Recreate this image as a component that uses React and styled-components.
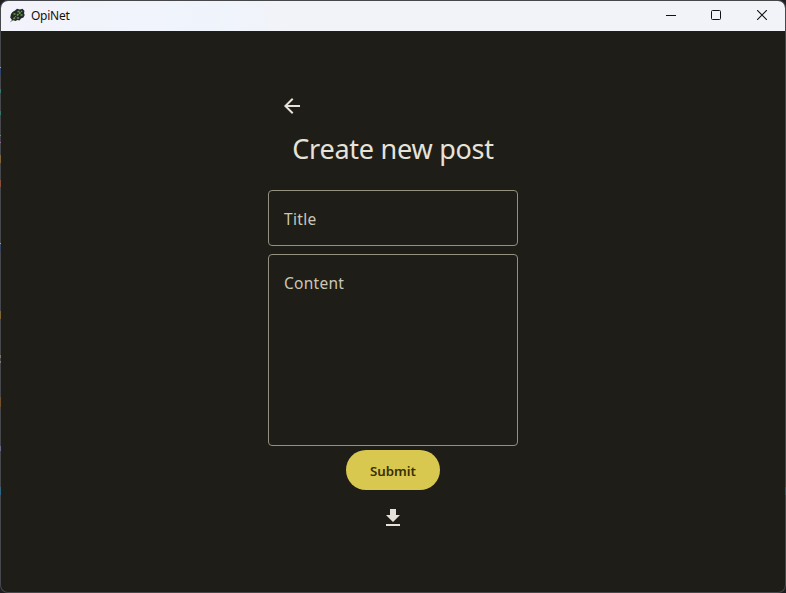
import React from "react";
import styled, { createGlobalStyle, css } from "styled-components";

const GlobalStyle = createGlobalStyle`
  * { box-sizing: border-box; }
  body { margin: 0; background: #1f1e22; font-family: "Noto Sans", "Open Sans", sans-serif; }
`;

const edgeSpecks = [
  [67, 1, "#a0a4aa"], [68, 8, "#30436f"], [89, 4, "#34776b"], [111, 4, "#34776b"],
  [135, 1, "#a06a98"], [142, 1, "#a06a98"], [155, 8, "#806536"], [180, 7, "#884e3e"],
  [243, 1, "#a0a4aa"], [246, 6, "#304468"], [311, 8, "#806536"], [355, 3, "#85735b"],
  [361, 2, "#777b80"], [397, 10, "#76512e"], [446, 5, "#666a88"], [487, 8, "#2f6686"],
]
  .map(([y, h, c]) => `transparent ${y}px, ${c} ${y}px ${y + h}px, transparent ${y + h}px`)
  .join(", ");

const Window = styled.div`
  width: 786px;
  height: 593px;
  display: flex;
  flex-direction: column;
  border: 1px solid transparent;
  border-radius: 8px;
  overflow: hidden;
  background:
    linear-gradient(#1e1d17, #1e1d17) padding-box,
    linear-gradient(180deg, ${edgeSpecks}) 0 0 / 1px 593px no-repeat border-box,
    linear-gradient(180deg, transparent 487px, #46568a 487px 495px, transparent 495px) 785px 0 / 1px 593px no-repeat border-box,
    linear-gradient(#45474b, #45474b) border-box;
`;

const TitleBar = styled.header`
  flex: none;
  height: 30px;
  display: flex;
  align-items: center;
  padding-left: 8px;
  background: linear-gradient(90deg, #f3f3fa 0, #eff4fc 210px, #f2f3f9 290px, #f1f3f9 100%);
`;

const AppName = styled.span`
  flex: 1;
  margin-left: 6px;
  font-size: 12px;
  line-height: 16px;
  letter-spacing: -0.25px;
  color: #111;
`;

const WindowButton = styled.button`
  width: 46px;
  height: 30px;
  padding: 0 0 2px;
  border: 0;
  background: transparent;
  display: grid;
  place-items: center;
`;

const Page = styled.main`
  flex: 1;
  display: flex;
  flex-direction: column;
  align-items: center;
  padding-top: 55px;
`;

const Form = styled.form`
  width: 250px;
  display: flex;
  flex-direction: column;
  align-items: center;
`;

const IconButton = styled.button`
  width: 40px;
  height: 40px;
  padding: 0;
  border: 0;
  background: transparent;
  color: #e7e2d9;
  display: grid;
  place-items: center;
  ${(p) => p.$back && css`align-self: flex-start; margin-left: 4px;`}
  ${(p) => p.$download && css`margin-top: 8px;`}
`;

const Heading = styled.h1`
  margin: 5px 0 0;
  height: 36px;
  font-size: 27px;
  line-height: 35px;
  font-weight: 400;
  letter-spacing: -0.25px;
  white-space: nowrap;
  color: #e7e2d9;
`;

const Field = styled.label`
  width: 250px;
  height: ${(p) => p.$height}px;
  margin-top: ${(p) => p.$gap}px;
  padding: 16px 15px;
  border: 1px solid #949180;
  border-radius: 4px;
  color: #cbc7b5;
  font-size: 15.5px;
  line-height: 24px;
`;

const FieldLabel = styled.span`
  display: block;
  letter-spacing: ${(p) => p.$spacing}px;
`;

const Submit = styled.button`
  width: 94px;
  height: 40px;
  margin-top: 4px;
  padding: 1px 0 0;
  border: 0;
  border-radius: 20px;
  background: #d9c84f;
  color: #373100;
  font: 600 13.3px/20px "Noto Sans", "Open Sans", sans-serif;
  letter-spacing: 0;
`;

const Leaf = () => (
  <svg width="16" height="16" viewBox="0 0 16 16">
    <path d="M.8 14.5 3 12 1.2 9.5 2 6l1.5-2L6 2.5 8 .8l3 .7 2.5-.7L15.5 3 15 5l.7 2-1.2 2.5-2.5 1-1.5 2-2-.5-2 1L4 12.3z" fill="#26292b" />
    <path d="M4.5 11 7 8.5M8 7.5 13 3M4.5 6h2M8.5 3.5h2M8 10h2M11.5 7h2" stroke="#62a03f" strokeWidth="1.6" fill="none" strokeDasharray="2 .8" />
  </svg>
);

export default function App() {
  return (
    <>
      <GlobalStyle />
      <Window>
        <TitleBar>
          <Leaf />
          <AppName>OpiNet</AppName>
          <WindowButton aria-label="Minimize">
            <svg width="12" height="10"><path d="M2 5.5h10" stroke="#111" /></svg>
          </WindowButton>
          <WindowButton aria-label="Maximize">
            <svg width="10" height="10"><rect x=".5" y=".5" width="9" height="9" rx="1" fill="none" stroke="#111" /></svg>
          </WindowButton>
          <WindowButton aria-label="Close">
            <svg width="10" height="10"><path d="m0 0 10 10M10 0 0 10" stroke="#111" strokeWidth="1.1" /></svg>
          </WindowButton>
        </TitleBar>
        <Page>
          <Form onSubmit={(e) => e.preventDefault()}>
            <IconButton $back type="button" aria-label="Back">
              <svg width="24" height="24" viewBox="0 0 24 24" fill="currentColor">
                <path d="M20 11H7.83l5.59-5.59L12 4l-8 8 8 8 1.41-1.41L7.83 13H20v-2z" />
              </svg>
            </IconButton>
            <Heading>Create new post</Heading>
            <Field $height={56} $gap={23}><FieldLabel $spacing={0.35}>Title</FieldLabel></Field>
            <Field $height={192} $gap={8}><FieldLabel $spacing={0.27}>Content</FieldLabel></Field>
            <Submit>Submit</Submit>
            <IconButton $download type="button" aria-label="Download">
              <svg width="24" height="24" viewBox="0 0 24 24" fill="currentColor">
                <path d="M19 9h-4V3H9v6H5l7 7 7-7zM5 18v2h14v-2H5z" />
              </svg>
            </IconButton>
          </Form>
        </Page>
      </Window>
    </>
  );
}
